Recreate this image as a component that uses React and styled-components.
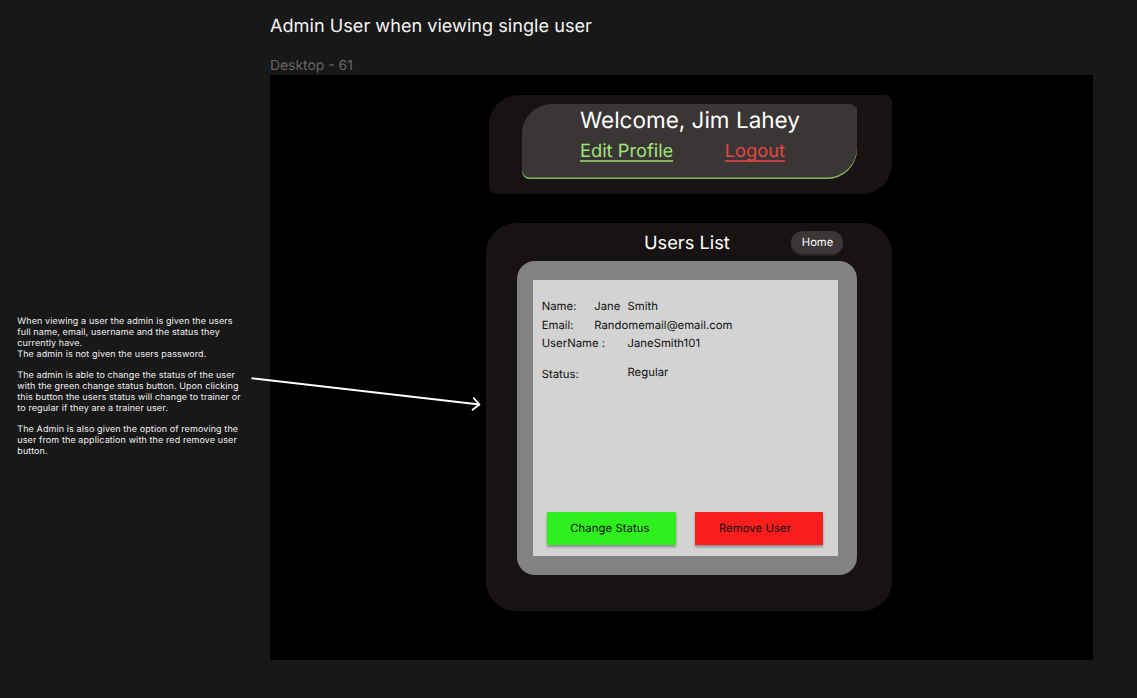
import React from "react";
import styled, { createGlobalStyle } from "styled-components";

const Global = createGlobalStyle`
  * { box-sizing: border-box; }
  body {
    margin: 0;
    background: #181818;
    font-family: Inter, "Liberation Sans", sans-serif;
    text-rendering: geometricPrecision;
  }
  button { text-rendering: inherit; }
`;

const Canvas = styled.div`
  position: relative;
  display: flex;
  width: 1137px;
  height: 698px;
  overflow: hidden;
  background: #181818;
  color: #fff;
`;

const Notes = styled.aside`
  width: 270px;
  padding: 317px 0 0 17.3px;
  font-size: 8.97px;
  line-height: 10.85px;
  letter-spacing: 0.115px;
  white-space: pre;
  color: #f2f2f2;
`;

const Note = styled.p`
  margin: 0 0 10.85px;
`;

const Main = styled.main`
  width: 823px;
`;

const Title = styled.h1`
  margin: 0;
  padding-top: 15px;
  height: 56px;
  font-size: 18.15px;
  font-weight: 400;
  line-height: 23px;
  white-space: nowrap;
  color: #f4f4f4;
`;

const FrameLabel = styled.div`
  height: 19px;
  font-size: 13.9px;
  line-height: 20px;
  color: #666;
`;

const Frame = styled.section`
  width: 823px;
  height: 585px;
  padding: 20px 201px 0 216px;
  background: #000;
`;

const HeaderCard = styled.header`
  margin-left: 3px;
  width: 403px;
  height: 99px;
  padding: 9px 0 0 33px;
  border-radius: 30px 7.5px 30px 7.5px;
  background: #171312;
`;

const Greeting = styled.div`
  width: 334.5px;
  height: 75px;
  padding-left: 58px;
  border-radius: 30px 7.5px 30px 7.5px;
  background: #3a3635;
  box-shadow: inset 0 -1.5px 0 #86b462;
`;

const Welcome = styled.div`
  height: 34px;
  font-size: 22.5px;
  font-weight: 400;
  line-height: 33px;
  white-space: nowrap;
`;

const Links = styled.nav`
  display: flex;
  gap: 51.5px;
`;

const TextLink = styled.a`
  height: 23.5px;
  font-size: 18.3px;
  font-weight: 400;
  line-height: 26px;
  color: ${(p) => p.$color};
  border-bottom: 2px solid ${(p) => p.$line};
`;

const UsersPanel = styled.section`
  margin-top: 29px;
  width: 406px;
  height: 387.5px;
  padding-left: 31px;
  border-radius: 30px;
  background: #171312;
`;

const PanelHead = styled.div`
  display: flex;
  align-items: flex-start;
  height: 38px;
  padding: 8px 0 0 127px;
`;

const PanelTitle = styled.h2`
  margin: 0;
  width: 147px;
  font-size: 18.25px;
  font-weight: 400;
  line-height: 24px;
`;

const HomeButton = styled.button`
  width: 52px;
  height: 23px;
  padding: 0 0 1px 1px;
  border: 0;
  border-radius: 12px;
  background: #3a3635;
  box-shadow: 0 1.5px 1.5px rgba(58, 54, 53, 0.6);
  color: #fff;
  font: 400 11.2px/22px Inter, sans-serif;
`;

const Card = styled.div`
  width: 340px;
  height: 314px;
  padding: 19px 19px 19px 16px;
  border-radius: 18px;
  background: #828282;
`;

const Details = styled.div`
  display: flex;
  flex-direction: column;
  height: 276px;
  padding: 16.5px 14px 11px 8.7px;
  background: #d3d3d3;
  color: #111;
  font-size: 11.3px;
  letter-spacing: 0.03px;
`;

const Field = styled.div`
  display: flex;
  height: 19px;
  line-height: 19px;
  margin-top: ${(p) => p.$top || 0}px;
`;

const Label = styled.span`
  width: ${(p) => p.$width}px;
  white-space: nowrap;
`;

const Value = styled.span`
  white-space: pre;
  margin-top: ${(p) => p.$lift || 0}px;
`;

const FirstName = styled(Value)`
  width: 33.3px;
`;

const Actions = styled.div`
  display: flex;
  gap: 19px;
  margin-top: auto;
  padding-left: 5.5px;
`;

const ActionButton = styled.button`
  width: 128.5px;
  height: 32.8px;
  padding: 0 ${(p) => p.$shift}px 1px 0;
  border: 0;
  background: ${(p) => p.$color};
  box-shadow: 0 1.5px 2.5px rgba(0, 0, 0, 0.35);
  color: #111;
  font: 400 11.3px/32px Inter, sans-serif;
  letter-spacing: 0.08px;
`;

const Arrow = styled.svg`
  position: absolute;
  left: 245px;
  top: 370px;
  pointer-events: none;
`;

export default function App() {
  return (
    <Canvas>
      <Global />
      <Notes>
        <Note>{"When viewing a user the admin is given the users\nfull name, email, username and the status they\ncurrently have.\nThe admin is not given the users password."}</Note>
        <Note>{"The admin is able to change the status of the user\nwith the green change status button. Upon clicking\nthis button the users status will change to trainer or\nto regular if they are a trainer user."}</Note>
        <Note>{"The Admin is also given the option of removing the\nuser from the application with the red remove user\nbutton."}</Note>
      </Notes>
      <Main>
        <Title>Admin User when viewing single user</Title>
        <FrameLabel>Desktop - 61</FrameLabel>
        <Frame>
          <HeaderCard>
            <Greeting>
              <Welcome>Welcome, Jim Lahey</Welcome>
              <Links>
                <TextLink $color="#a1e57b" $line="#86b462">Edit Profile</TextLink>
                <TextLink $color="#e84545" $line="#c93e3e">Logout</TextLink>
              </Links>
            </Greeting>
          </HeaderCard>
          <UsersPanel>
            <PanelHead>
              <PanelTitle>Users List</PanelTitle>
              <HomeButton>Home</HomeButton>
            </PanelHead>
            <Card>
              <Details>
                <Field>
                  <Label $width={52.5}>Name:</Label>
                  <FirstName>Jane</FirstName>
                  <Value>Smith</Value>
                </Field>
                <Field>
                  <Label $width={52.5}>Email:</Label>
                  <Value>Randomemail@email.com</Value>
                </Field>
                <Field $top={-0.5}>
                  <Label $width={85.8}>UserName :</Label>
                  <Value>JaneSmith101</Value>
                </Field>
                <Field $top={12}>
                  <Label $width={85.8}>Status:</Label>
                  <Value $lift={-2}>Regular</Value>
                </Field>
                <Actions>
                  <ActionButton $color="#2ff01f" $shift={3}>Change Status</ActionButton>
                  <ActionButton $color="#f81e1e" $shift={8}>Remove User</ActionButton>
                </Actions>
              </Details>
            </Card>
          </UsersPanel>
        </Frame>
      </Main>
      <Arrow width="240" height="45" viewBox="0 0 240 45" fill="none" stroke="#fff" strokeWidth="2">
        <path d="M6.5 8.2L234.5 34.5" />
        <path d="M228.7 28.2L234.5 34.5L227.5 39.7" strokeWidth="1.8" strokeLinecap="round" strokeLinejoin="round" />
      </Arrow>
    </Canvas>
  );
}
